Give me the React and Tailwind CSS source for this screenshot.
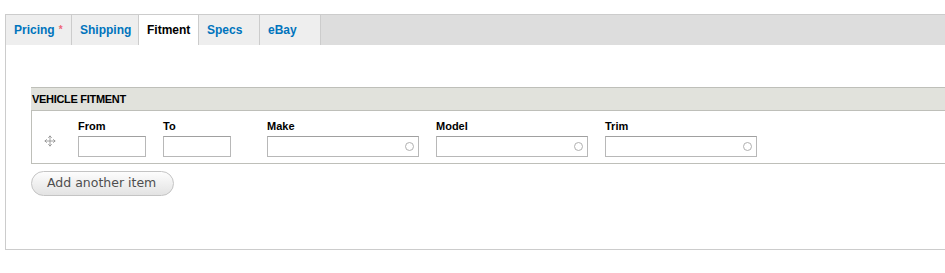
import React from 'react';
import { Move } from 'lucide-react';

const tabs = [
  { label: 'Pricing', width: 'w-[66px]', required: true },
  { label: 'Shipping', width: 'w-[67px]' },
  { label: 'Fitment', width: 'w-[60px]', active: true },
  { label: 'Specs', width: 'w-[61px]' },
  { label: 'eBay', width: 'w-[61px]' },
];

const AutoInput = ({ width }) => (
  <div className={`relative ${width} h-[21px] border border-[#b8b8b8] border-t-[#a0a0a0] bg-white`}>
    <span className="absolute right-[4px] top-[5px] w-[9px] h-[9px] rounded-full border-[1.5px] border-[#b0b0b0]" />
  </div>
);

const Field = ({ label, width, input }) => (
  <div className={width}>
    <div className="h-[13px] leading-[13px] text-[11px] font-bold text-black mb-[3px]">{label}</div>
    {input}
  </div>
);

export default function App() {
  return (
    <div className="w-[945px] h-[273px] overflow-hidden bg-white" style={{ fontFamily: '"Liberation Sans", Arial, sans-serif' }}>
      <div className="ml-[5px] mt-[14px] w-[980px] border border-[#cccccc]">
        <div className="flex h-[30px] bg-[#dddddd]">
          {tabs.map(tab => (
            <div
              key={tab.label}
              className={`${tab.width} flex items-center px-2 border-r border-[#cccccc] text-[12px] font-bold ${tab.active ? 'bg-white text-black' : 'bg-[#eeeeee] text-[#0074bd]'}`}
            >
              {tab.label}
              {tab.required && <span className="ml-[4px] text-[10px] text-[#ee6677] -mt-[2px]">*</span>}
            </div>
          ))}
        </div>

        <div className="bg-white pl-[25px] pt-[42px] pb-[53px]">
          <div className="border-y border-[#bebfb9] bg-[#e1e2dc] h-[24px] flex items-center pl-[1px]">
            <span className="text-[11px] font-bold text-black tracking-[-0.3px]">VEHICLE FITMENT</span>
          </div>
          <div className="flex border-l border-b border-[#bebfb9] pt-[9px] pb-[6px]">
            <div className="w-[36px] flex items-center justify-center pt-[4px]">
              <Move size={12} strokeWidth={1.6} className="text-[#8a8a8a]" />
            </div>
            <div className="flex pl-[10px]">
              <Field label="From" width="w-[85px]" input={<div className="w-[68px] h-[21px] border border-[#b8b8b8] border-t-[#a0a0a0]" />} />
              <Field label="To" width="w-[104px]" input={<div className="w-[68px] h-[21px] border border-[#b8b8b8] border-t-[#a0a0a0]" />} />
              <Field label="Make" width="w-[169px]" input={<AutoInput width="w-[152px]" />} />
              <Field label="Model" width="w-[169px]" input={<AutoInput width="w-[152px]" />} />
              <Field label="Trim" width="w-[169px]" input={<AutoInput width="w-[152px]" />} />
            </div>
          </div>
          <button
            className="mt-[7px] w-[143px] h-[25px] rounded-full border border-[#c4c4c4] bg-gradient-to-b from-[#fdfdfd] to-[#e3e3e3] text-[12.5px] text-[#4e4e4e] pl-[15px] text-left"
            style={{ fontFamily: '"DejaVu Sans", Verdana, sans-serif' }}
          >
            Add another item
          </button>
        </div>
      </div>
    </div>
  );
}
